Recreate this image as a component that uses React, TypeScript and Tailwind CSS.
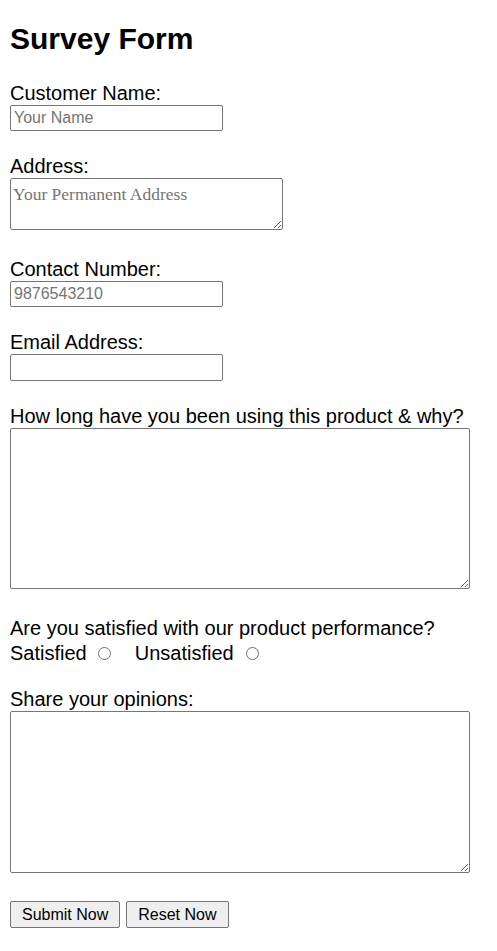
import React from 'react'

const inputCls =
  'block w-[213px] h-[26px] border border-[#767676] rounded-[2px] px-[3px] text-[16px] text-black placeholder-[#757575] bg-white focus:outline-none'

const areaCls =
  'block border border-[#767676] rounded-[2px] px-[2px] py-[2px] text-[16px] text-black placeholder-[#757575] bg-white resize focus:outline-none'

const radioCls =
  'appearance-none shrink-0 w-[13px] h-[13px] min-w-[13px] rounded-full border border-[#6f6f6f] bg-white checked:border-[4px] checked:border-[#0075ff]'

export default function App() {
  const [choice, setChoice] = React.useState('')

  return (
    <div className="min-h-screen bg-white text-black font-['Liberation_Sans',Arial,sans-serif] px-[10px]">
      <form onSubmit={(e) => e.preventDefault()} className="flex flex-col pb-[24px]">
        <h1 className="mt-[22px] text-[30px] leading-[34px] font-bold">Survey Form</h1>

        <label className="mt-[26px] text-[20px] leading-[23px]">Customer Name:</label>
        <input type="text" placeholder="Your Name" className={inputCls} />

        <label className="mt-[24px] text-[20px] leading-[23px]">Address:</label>
        <textarea
          placeholder="Your Permanent Address"
          className={areaCls + " w-[273px] h-[52px] pt-[5px] text-[17.5px] font-['Liberation_Serif',serif] leading-[20px]"}
        />

        <label className="mt-[28px] text-[20px] leading-[23px]">Contact Number:</label>
        <input type="tel" placeholder="9876543210" className={inputCls} />

        <label className="mt-[24px] text-[20px] leading-[23px]">Email Address:</label>
        <input type="email" className={inputCls + ' h-[27px]'} />

        <label className="mt-[24px] text-[20px] leading-[23px]">
          How long have you been using this product &amp; why?
        </label>
        <textarea className={areaCls + ' w-[460px] h-[161px]'} />

        <p className="mt-[28px] text-[20px] leading-[23px]">Are you satisfied with our product performance?</p>
        <div className="mt-[2px] flex items-center text-[20px] leading-[23px]">
          <span>Satisfied</span>
          <input
            type="radio"
            name="satisfied"
            checked={choice === 'yes'}
            onChange={() => setChoice('yes')}
            className={radioCls + ' ml-[11px]'}
          />
          <span className="ml-[24px]">Unsatisfied</span>
          <input
            type="radio"
            name="satisfied"
            checked={choice === 'no'}
            onChange={() => setChoice('no')}
            className={radioCls + ' ml-[12px]'}
          />
        </div>

        <label className="mt-[23px] text-[20px] leading-[23px]">Share your opinions:</label>
        <textarea className={areaCls + ' w-[460px] h-[162px]'} />

        <div className="mt-[28px] flex gap-[6px]">
          <button
            type="submit"
            className="h-[27px] px-[11px] text-[16px] leading-[18px] bg-[#efefef] border border-[#767676] rounded-[2px] text-black"
          >
            Submit Now
          </button>
          <button
            type="reset"
            onClick={() => setChoice('')}
            className="h-[27px] px-[11px] text-[16px] leading-[18px] bg-[#efefef] border border-[#767676] rounded-[2px] text-black"
          >
            Reset Now
          </button>
        </div>
      </form>
    </div>
  )
}
